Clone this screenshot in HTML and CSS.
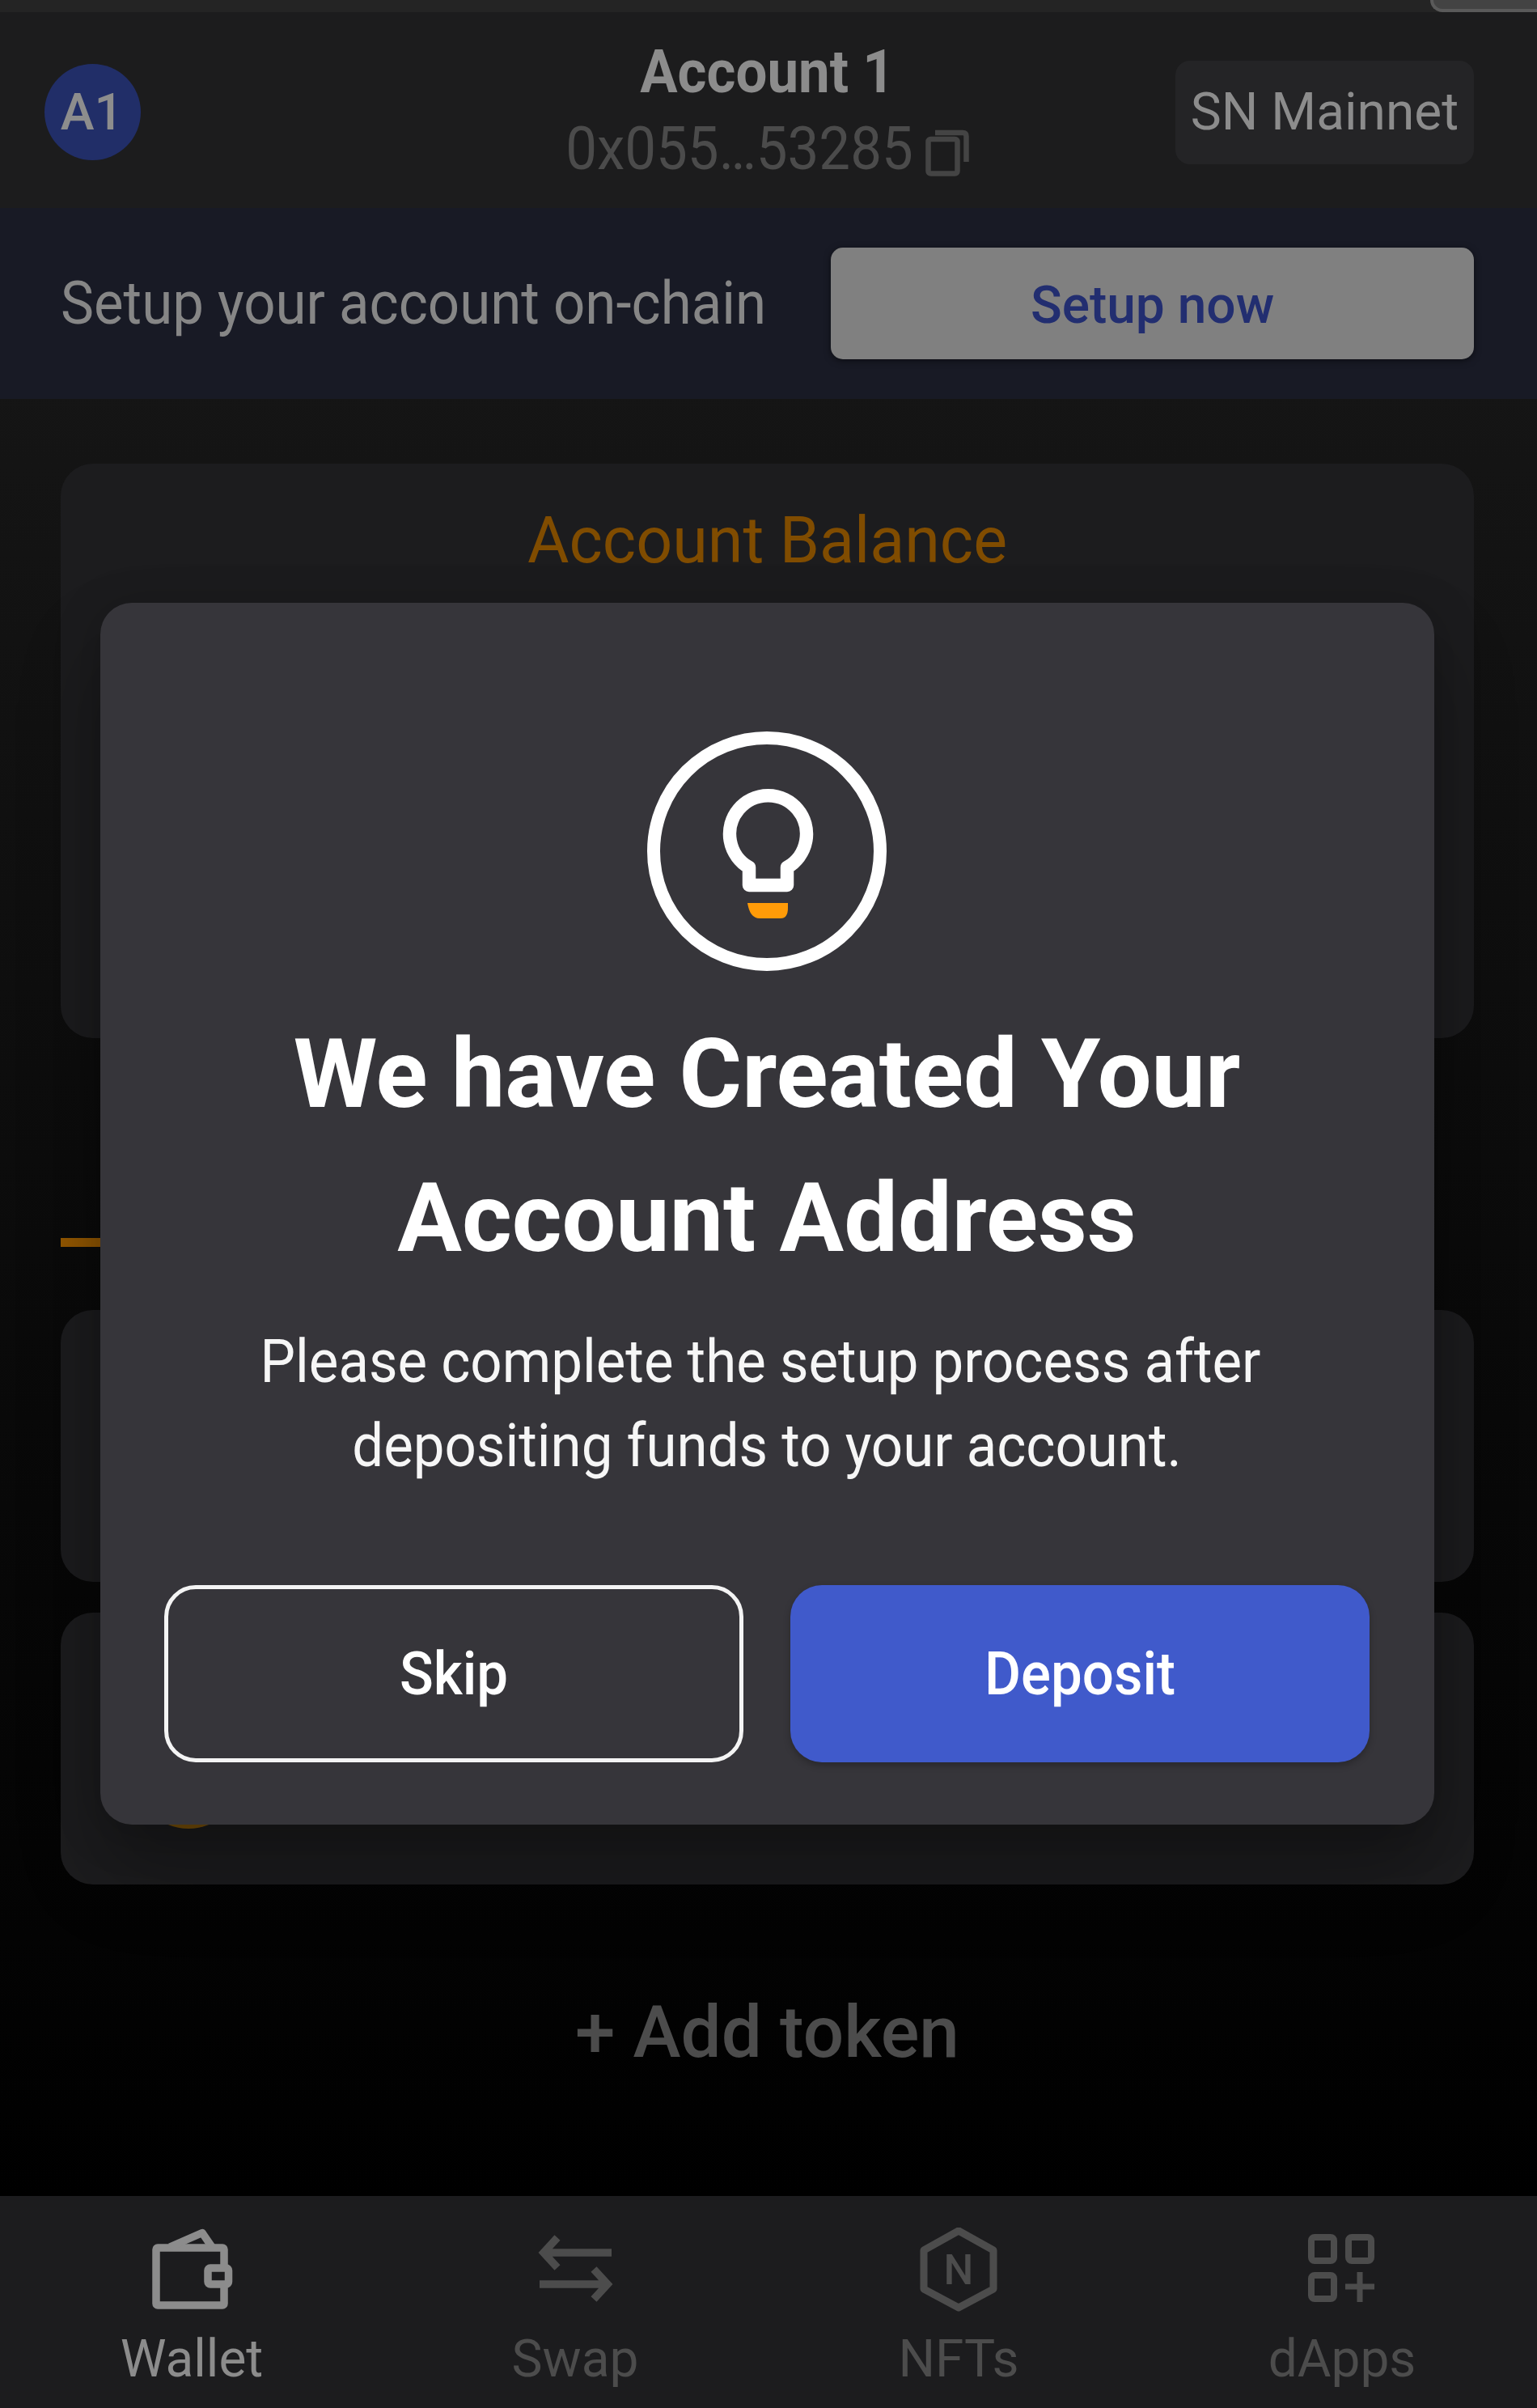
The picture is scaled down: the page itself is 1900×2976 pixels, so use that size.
FILE: index.html
```html
<!DOCTYPE html>
<html lang="en">
<head>
<meta charset="utf-8">
<title>Wallet</title>
<link rel="stylesheet" href="styles.css">
</head>
<body>
<div class="app">
  <div class="strip"><div class="strip-tab"></div></div>
  <header class="header">
    <div class="header-side"><div class="avatar"><span>A1</span></div></div>
    <div class="account">
      <div class="account-name"><span class="tall">Account 1</span></div>
      <div class="account-address">
        <span class="tall">0x055…53285</span>
        <svg class="copy-icon" viewBox="0 0 54 58" fill="none" stroke="currentColor" stroke-width="6.5" stroke-linejoin="round">
          <rect x="3.5" y="12" width="36" height="42.5" rx="3"/>
          <path d="M12 4H46Q50.5 4 50.5 8.5V40"/>
        </svg>
      </div>
    </div>
    <div class="header-side header-right"><div class="network"><span>SN Mainnet</span></div></div>
  </header>
  <section class="banner">
    <p class="banner-text"><span class="tall">Setup your account on-chain</span></p>
    <button class="setup"><span>Setup now</span></button>
  </section>
  <main class="content">
    <section class="card balance"><h2><span>Account Balance</span></h2></section>
    <div class="tabs"></div>
    <section class="card token"></section>
    <section class="card token"><i class="token-logo"></i></section>
    <div class="add-token"><span>+ Add token</span></div>
  </main>
  <nav class="nav">
    <div class="nav-item active">
      <svg class="nav-icon" viewBox="0 0 104 104" fill="none" stroke="currentColor" stroke-width="9.5" stroke-linejoin="round">
        <rect x="8" y="25" width="84" height="71" rx="2"/>
        <path d="M25 24L65 6.500L77 24"/>
        <rect class="clasp" x="72" y="50" width="25.500" height="20" rx="3"/>
      </svg>
      <span class="nav-label">Wallet</span>
    </div>
    <div class="nav-item">
      <svg class="nav-icon" viewBox="0 0 104 104" fill="none" stroke="currentColor" stroke-width="9.500">
        <path d="M97 31H12M30 12.500L13 31L30 49.500M8 70H93M75 51.500L92 70L75 88.500"/>
      </svg>
      <span class="nav-label">Swap</span>
    </div>
    <div class="nav-item">
      <svg class="nav-icon" viewBox="0 0 104 104" fill="none" stroke="currentColor" stroke-width="9" stroke-linejoin="round">
        <path d="M52 4L95 28V76L52 99L9 76V28Z"/>
        <text class="nft-letter" x="52" y="70">N</text>
      </svg>
      <span class="nav-label">NFTs</span>
    </div>
    <div class="nav-item">
      <svg class="nav-icon" viewBox="0 0 104 104" fill="none" stroke="currentColor" stroke-width="8">
        <rect x="14" y="12" width="28" height="29" rx="4"/>
        <rect x="60" y="12" width="28" height="29" rx="4"/>
        <rect x="14" y="59" width="28" height="29" rx="4"/>
        <path stroke-width="7" d="M56 73H92M74 55V92"/>
      </svg>
      <span class="nav-label">dApps</span>
    </div>
  </nav>
  <div class="modal" role="dialog">
    <svg class="bulb" viewBox="0 0 296 296" fill="none">
      <circle cx="148" cy="148" r="140" stroke="#fff" stroke-width="16"/>
      <path d="M126 168A47.500 47.500 0 1 1 173 168V190H126Z" stroke="#fff" stroke-width="16.500" stroke-linejoin="round"/>
      <path d="M124 212H174V218Q174 231 165 231H139Q127 231 124 212Z" fill="#ff9b08"/>
    </svg>
    <h1>We have Created Your<br>Account Address</h1>
    <p><span class="tall first-line">Please complete the setup process after</span><br><span class="tall">depositing funds to your account.</span></p>
    <div class="actions">
      <button class="btn skip"><span class="tall">Skip</span></button>
      <button class="btn deposit"><span class="tall">Deposit</span></button>
    </div>
  </div>
</div>
</body>
</html>
```
FILE: styles.css
```css
* { box-sizing: border-box; margin: 0; padding: 0; }
html, body { width: 1900px; height: 2976px; overflow: hidden; }
body { font-family: Roboto, "Liberation Sans", sans-serif; background: #000; }
button { font-family: inherit; border: 0; }

/* body-size text, set slightly narrow */
.tall { display: inline-block; font-size: 69px; transform: scaleY(1.075); }

.app {
  position: relative;
  width: 1900px;
  height: 2976px;
  display: flex;
  flex-direction: column;
  background: linear-gradient(#171717 257px, #000 2714px);
}

.strip { height: 15px; background: #242424; display: flex; justify-content: flex-end; }
.strip-tab {
  width: 132px;
  height: 15px;
  background: #434343;
  border-left: 4px solid #5a5a5a;
  border-bottom: 4px solid #5a5a5a;
  border-bottom-left-radius: 15px;
}

.header {
  height: 242px;
  padding: 0 78px 0 55px;
  background: #1c1c1d;
  display: grid;
  grid-template-columns: 500px 787px 480px;
  line-height: 1;
}
.header-side { display: flex; align-items: flex-start; padding-top: 64px; }
.header-right { justify-content: flex-end; padding-top: 60px; }
.avatar {
  width: 119px;
  height: 119px;
  border-radius: 50%;
  background: #212e68;
  color: #8d8d8d;
  display: flex;
  align-items: center;
  justify-content: center;
  font-size: 63px;
  font-weight: 500;
  padding-right: 2px;
}
.account { display: flex; flex-direction: column; align-items: center; padding-top: 36px; }
.account-name { color: #8c8c8c; font-weight: 700; line-height: 76px; height: 95px; }
.account-address {
  display: flex;
  align-items: flex-start;
  gap: 15px;
  color: #4b4b4b;
  line-height: 76px;
}
.copy-icon { width: 54px; height: 58px; margin-top: 14px; color: #444; }
.network {
  width: 369px;
  height: 128px;
  border-radius: 18px;
  background: #242426;
  color: #8c8c8c;
  display: flex;
  align-items: center;
  justify-content: center;
  font-size: 64px;
}

.banner {
  height: 236px;
  padding: 49px 78px 0 75px;
  background: #181a25;
  display: flex;
  align-items: flex-start;
  justify-content: space-between;
}
.banner-text { color: #868686; line-height: 138px; white-space: nowrap; }
.setup {
  width: 795px;
  height: 138px;
  padding-top: 4px;
  border-radius: 15px;
  background: #808080;
  color: #222e70;
  font-size: 64px;
  font-weight: 500;
  box-shadow: 0 2px 8px rgba(0, 0, 0, .5);
}

.content { padding: 80px 78px 0 75px; height: 2221px; }
.card { background: #1c1c1e; border-radius: 40px; }
.balance { height: 710px; padding-top: 48px; text-align: center; }
.balance h2 { color: #804c00; font-size: 79px; font-weight: 400; line-height: 94px; }
.tabs { width: 874px; height: 258px; border-bottom: 11px solid #945800; margin-bottom: 78px; }
.token { height: 336px; margin-bottom: 38px; padding-left: 92px; display: flex; align-items: center; }
.token-logo { width: 132px; height: 198px; border-radius: 66px; background: #80560a; }
.add-token {
  margin-top: 131px;
  color: #4c4c4c;
  font-size: 89px;
  font-weight: 500;
  line-height: 104px;
  text-align: center;
}

.nav {
  height: 262px;
  padding: 39px 4px 0 0;
  background: #1c1c1e;
  display: grid;
  grid-template-columns: repeat(4, 474px);
}
.nav-item { color: #4c4c4c; display: flex; flex-direction: column; align-items: center; }
.nav-item.active { color: #8c8c8c; }
.nav-icon { width: 104px; height: 104px; }
.clasp { fill: #1c1c1e; }
.nft-letter { font-size: 52px; font-weight: 500; fill: currentColor; stroke: none; text-anchor: middle; }
.nav-label { margin-top: 21px; font-size: 64px; line-height: 76px; }

.modal {
  position: absolute;
  left: 124px;
  top: 745px;
  width: 1649px;
  height: 1510px;
  padding: 159px 80px 0 79px;
  border-radius: 39px;
  background: #36353a;
  box-shadow: 0 60px 100px rgba(0, 0, 0, .28), 0 10px 60px rgba(0, 0, 0, .2);
  color: #fff;
  text-align: center;
  display: flex;
  flex-direction: column;
  align-items: center;
}
.bulb { width: 296px; height: 296px; flex: none; }
.modal h1 { margin-top: 39px; font-size: 118.500px; font-weight: 700; line-height: 178px; white-space: nowrap; }
.modal p { margin-top: 36px; font-size: 69px; line-height: 104px; white-space: nowrap; color: #f6f6f6; }
.first-line { margin-right: 16px; }
.actions { margin-top: 120px; width: 100%; display: flex; justify-content: space-between; }
.btn {
  width: 716px;
  height: 219px;
  border-radius: 39px;
  font-weight: 500;
  color: #fff;
}
.skip { background: transparent; border: 5px solid #f4f4f4; }
.deposit { background: #405acb; box-shadow: 0 4px 9px rgba(0, 0, 0, .25); }
```
